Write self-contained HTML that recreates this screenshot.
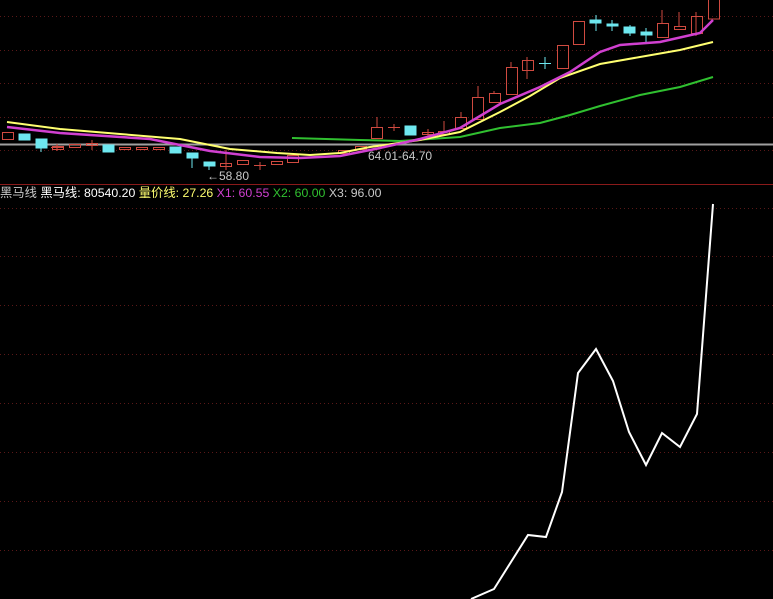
<!DOCTYPE html><html><head><meta charset="utf-8"><style>
html,body{margin:0;padding:0;background:#000;width:773px;height:599px;overflow:hidden}
svg{display:block}
text{font-family:"Liberation Sans","Noto Sans CJK SC",sans-serif}
</style></head><body>
<svg width="773" height="599" viewBox="0 0 773 599" xmlns="http://www.w3.org/2000/svg">
<g stroke="#5a1818" stroke-width="1" stroke-dasharray="1,3">
<line x1="0" y1="16.5" x2="773" y2="16.5"/><line x1="0" y1="50.5" x2="773" y2="50.5"/><line x1="0" y1="83.5" x2="773" y2="83.5"/><line x1="0" y1="117.5" x2="773" y2="117.5"/><line x1="0" y1="150.5" x2="773" y2="150.5"/>
<line x1="0" y1="208.5" x2="773" y2="208.5"/><line x1="0" y1="256.5" x2="773" y2="256.5"/><line x1="0" y1="305.5" x2="773" y2="305.5"/><line x1="0" y1="354.5" x2="773" y2="354.5"/><line x1="0" y1="403.5" x2="773" y2="403.5"/><line x1="0" y1="452.5" x2="773" y2="452.5"/><line x1="0" y1="501.5" x2="773" y2="501.5"/><line x1="0" y1="550.5" x2="773" y2="550.5"/>
</g>
<line x1="0" y1="144.5" x2="773" y2="144.5" stroke="#a0a0a0" stroke-width="2"/>
<line x1="0" y1="184.5" x2="773" y2="184.5" stroke="#8a1a1a" stroke-width="1"/>
<g fill="none" stroke="#d04a40" stroke-width="1">
<rect x="2.5" y="132.5" width="11" height="7"/>
<line x1="51" y1="147.5" x2="63" y2="147.5"/><line x1="57" y1="144" x2="57" y2="151"/><rect x="52.5" y="146.5" width="11" height="3"/>
<rect x="69.5" y="144.5" width="11" height="3"/>
<rect x="86.5" y="143.5" width="11" height="2"/><line x1="92" y1="140" x2="92" y2="150"/>
<rect x="119.5" y="147.5" width="11" height="2"/><rect x="136.5" y="147.5" width="11" height="2"/><rect x="153.5" y="147.5" width="11" height="2"/>
<rect x="220.5" y="163.5" width="11" height="3"/><line x1="226" y1="150" x2="226" y2="170"/>
<rect x="237.5" y="160.5" width="11" height="4"/>
<line x1="254" y1="165.5" x2="266" y2="165.5"/><line x1="260" y1="162" x2="260" y2="170"/>
<rect x="271.5" y="161.5" width="11" height="3"/>
<rect x="287.5" y="155.5" width="11" height="7"/>
<rect x="338.5" y="150.5" width="11" height="3"/><rect x="355.5" y="146.5" width="11" height="3"/>
<rect x="371.5" y="127.5" width="11" height="11"/><line x1="377" y1="117" x2="377" y2="127"/>
<line x1="388" y1="127.5" x2="400" y2="127.5"/><line x1="394" y1="124" x2="394" y2="131"/>
<rect x="422.5" y="132.5" width="11" height="2"/><line x1="428" y1="129" x2="428" y2="137"/>
<rect x="438.5" y="131.5" width="11" height="3"/><line x1="444" y1="121" x2="444" y2="131"/>
<rect x="455.5" y="117.5" width="11" height="11"/><line x1="461" y1="112" x2="461" y2="117"/>
<rect x="472.5" y="97.5" width="11" height="22"/><line x1="478" y1="86" x2="478" y2="97"/>
<rect x="489.5" y="93.5" width="11" height="9"/><line x1="494" y1="91" x2="494" y2="93"/>
<rect x="506.5" y="67.5" width="11" height="27"/><line x1="511" y1="62" x2="511" y2="67"/>
<rect x="522.5" y="60.5" width="11" height="10"/><line x1="527" y1="57" x2="527" y2="79"/>
<rect x="557.5" y="45.5" width="11" height="23"/>
<rect x="573.5" y="21.5" width="11" height="23"/>
<rect x="657.5" y="23.5" width="11" height="14"/><line x1="662" y1="10" x2="662" y2="23"/>
<rect x="674.5" y="26.5" width="11" height="3"/><line x1="679" y1="12" x2="679" y2="26"/>
<rect x="691.5" y="16.5" width="11" height="17"/><line x1="696" y1="12" x2="696" y2="36"/>
<rect x="708.5" y="-1" width="11" height="20"/>
</g>
<g fill="#6ee8f0" stroke="#6ee8f0">
<rect x="19" y="134" width="11" height="6"/><rect x="36" y="139" width="11" height="9"/><line x1="41" y1="148" x2="41" y2="152"/>
<rect x="103" y="145" width="11" height="7"/><rect x="170" y="147" width="11" height="6"/>
<rect x="187" y="153" width="11" height="5"/><line x1="192" y1="158" x2="192" y2="168"/>
<rect x="204" y="162" width="11" height="4"/><line x1="209" y1="166" x2="209" y2="170"/>
<rect x="405" y="126" width="11" height="9"/>
<line x1="539" y1="63.5" x2="551" y2="63.5"/><line x1="545" y1="57" x2="545" y2="69"/>
<rect x="590" y="20" width="11" height="3"/><line x1="596" y1="15" x2="596" y2="31"/>
<rect x="607" y="24" width="11" height="2"/><line x1="612" y1="20" x2="612" y2="31"/>
<rect x="624" y="27" width="11" height="6"/><line x1="630" y1="25" x2="630" y2="36"/>
<rect x="641" y="32" width="11" height="3"/><line x1="646" y1="28" x2="646" y2="42"/>
</g>
<polyline fill="none" stroke="#30c030" stroke-width="2" points="292,138 360,140 400,141 460,137 500,128 540,123 570,115 600,106 640,95 680,87 713,77"/>
<polyline fill="none" stroke="#ffff70" stroke-width="2" points="7,122 60,129 120,134 180,139 230,149 277,153 310,155 340,153 370,147 420,140 460,132 500,112 530,96 560,78 600,64 640,57 680,50 713,42"/>
<polyline fill="none" stroke="#d040d0" stroke-width="2.5" points="7,127 60,133 150,139 210,151 260,157 300,158 340,156 380,148 420,139 460,128 500,104 540,87 570,72 600,52 620,45 660,42 700,33 713,20"/>
<text x="368" y="160" font-size="12" fill="#c8c8c8">64.01-64.70</text>
<text x="207" y="180" font-size="12" fill="#c8c8c8">←58.80</text>
<text x="0" y="197" font-size="12.3"><tspan fill="#c8c8c8">黑马线 </tspan><tspan fill="#fff">黑马线: 80540.20 </tspan><tspan fill="#ffff70">量价线: 27.26 </tspan><tspan fill="#d040d0">X1: 60.55 </tspan><tspan fill="#30c030">X2: 60.00 </tspan><tspan fill="#c8c8c8">X3: 96.00</tspan></text>
<polyline fill="none" stroke="#fff" stroke-width="2" points="471,599 494,589 528,535 546,537 562,492 578,373 596,349 613,381 629,432 646,465 662,433 680,447 697,414 713,204"/>
</svg>
</body></html>
